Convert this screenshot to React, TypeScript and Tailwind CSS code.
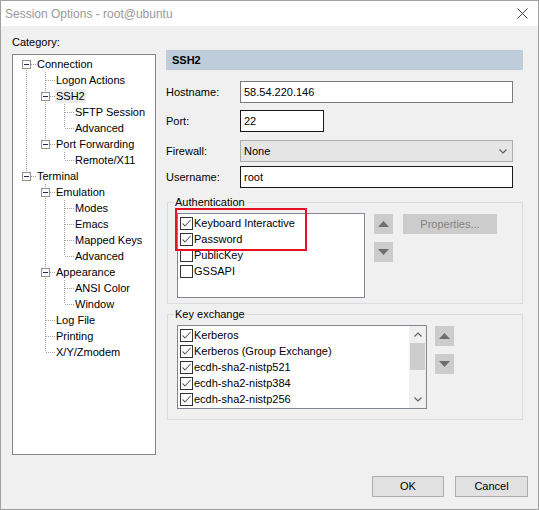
import React from "react";

type TreeNode = { label: string; children?: TreeNode[]; selected?: boolean };

const tree: TreeNode[] = [
  {
    label: "Connection",
    children: [
      { label: "Logon Actions" },
      { label: "SSH2", selected: true, children: [{ label: "SFTP Session" }, { label: "Advanced" }] },
      { label: "Port Forwarding", children: [{ label: "Remote/X11" }] },
    ],
  },
  {
    label: "Terminal",
    children: [
      {
        label: "Emulation",
        children: [{ label: "Modes" }, { label: "Emacs" }, { label: "Mapped Keys" }, { label: "Advanced" }],
      },
      { label: "Appearance", children: [{ label: "ANSI Color" }, { label: "Window" }] },
      { label: "Log File" },
      { label: "Printing" },
      { label: "X/Y/Zmodem" },
    ],
  },
];

type Row = { node: TreeNode; level: number; guides: boolean[]; last: boolean; first: boolean };

function flatten(nodes: TreeNode[], level: number, guides: boolean[], out: Row[]) {
  nodes.forEach((n, i) => {
    const last = i === nodes.length - 1;
    out.push({ node: n, level, guides, last, first: level === 0 && i === 0 });
    if (n.children) flatten(n.children, level + 1, [...guides, !last], out);
  });
  return out;
}

const rows = flatten(tree, 0, [], []);

const DOT = "#a0a0a0";

function GuideCell({ show }: { show: boolean }) {
  return (
    <svg width="19" height="16" className="shrink-0" shapeRendering="crispEdges">
      {show && <line x1="9.5" y1="0" x2="9.5" y2="16" stroke={DOT} strokeDasharray="1 1" />}
    </svg>
  );
}

function OwnCell({ row }: { row: Row }) {
  const hasKids = !!row.node.children;
  return (
    <svg width="19" height="16" className="shrink-0" shapeRendering="crispEdges">
      {!row.first && <line x1="9.5" y1="0" x2="9.5" y2="8" stroke={DOT} strokeDasharray="1 1" />}
      {!row.last && <line x1="9.5" y1="8" x2="9.5" y2="16" stroke={DOT} strokeDasharray="1 1" />}
      <line x1="10" y1="8.5" x2="19" y2="8.5" stroke={DOT} strokeDasharray="1 1" />
      {hasKids && (
        <>
          <rect x="5.5" y="4.5" width="8" height="8" fill="#fff" stroke="#919191" />
          <line x1="7" y1="8.5" x2="12" y2="8.5" stroke="#1f2a5a" />
        </>
      )}
    </svg>
  );
}

function Check({ on }: { on: boolean }) {
  return (
    <div className="w-[13px] h-[13px] shrink-0 border border-[#333] bg-white">
      {on && (
        <svg width="11" height="11" viewBox="0 0 11 11">
          <polyline points="1.5,5.5 4,8 9.5,2" fill="none" stroke="#666" strokeWidth="1.1" />
        </svg>
      )}
    </div>
  );
}

function CheckRow({ label, on }: { label: string; on: boolean }) {
  return (
    <div className="flex items-center h-[16px] pl-[2px]">
      <Check on={on} />
      <span className="ml-[1px] leading-[16px] whitespace-nowrap">{label}</span>
    </div>
  );
}

function Arrow({ up }: { up: boolean }) {
  return (
    <div className="w-[19px] h-[20px] bg-[#cccccc] flex items-center justify-center">
      <svg width="11" height="6" viewBox="0 0 11 6">
        {up ? <polygon points="0,6 11,6 5.5,0" fill="#6e6e6e" /> : <polygon points="0,0 11,0 5.5,6" fill="#6e6e6e" />}
      </svg>
    </div>
  );
}

function Chevron({ up }: { up: boolean }) {
  return (
    <svg width="8" height="5" viewBox="0 0 8 5">
      <polyline points={up ? "0.5,4.5 4,1 7.5,4.5" : "0.5,0.5 4,4 7.5,0.5"} fill="none" stroke="#606060" strokeWidth="1.2" />
    </svg>
  );
}

function Field({ label, children, className }: { label: string; children: React.ReactNode; className: string }) {
  return (
    <div className={"flex items-center " + className}>
      <span className="w-[74px] shrink-0">{label}</span>
      {children}
    </div>
  );
}

export default function App() {
  return (
    <div className="w-[539px] h-[510px] border border-[#a0a0a0] bg-[#f0f0f0] flex flex-col font-['Liberation_Sans',Arial,sans-serif] text-[11px] text-black">
      <div className="h-[25px] shrink-0 bg-white flex items-center justify-between pl-[4px] pr-[10px]">
        <span className="text-[12px] text-[#999999]">Session Options - root@ubuntu</span>
        <svg width="11" height="11" viewBox="0 0 11 11">
          <line x1="0.5" y1="0.5" x2="10.5" y2="10.5" stroke="#444" />
          <line x1="10.5" y1="0.5" x2="0.5" y2="10.5" stroke="#444" />
        </svg>
      </div>

      <div className="flex pl-[11px]">
        {/* category tree */}
        <div className="w-[144px] shrink-0 mt-[8px]">
          <div className="h-[16px] leading-[16px]">Category:</div>
          <div className="mt-[4px] h-[401px] border border-[#828790] bg-white pt-[1px] pl-[4px]">
            {rows.map((r, i) => (
              <div key={i} className="flex items-center h-[16px]">
                {r.guides.map((g, j) => (
                  <GuideCell key={j} show={g} />
                ))}
                <OwnCell row={r} />
                <span
                  className={
                    "ml-[0px] px-[1px] h-[14px] leading-[14px] whitespace-nowrap " +
                    (r.node.selected ? "bg-[#ececec]" : "")
                  }
                >
                  {r.node.label}
                </span>
              </div>
            ))}
          </div>
        </div>

        {/* right panel */}
        <div className="w-[357px] ml-[10px] mt-[24px]">
          <div className="h-[20px] bg-[#bfcddb] pl-[6px] font-bold leading-[20px]">SSH2</div>

          <Field label="Hostname:" className="mt-[11px]">
            <div className="w-[273px] h-[22px] border border-[#7a7a7a] bg-white pl-[3px] leading-[20px]">58.54.220.146</div>
          </Field>
          <Field label="Port:" className="mt-[7px]">
            <div className="w-[84px] h-[22px] border border-[#1a1a1a] bg-white pl-[3px] leading-[20px]">22</div>
          </Field>
          <Field label="Firewall:" className="mt-[8px]">
            <div className="w-[273px] h-[22px] border border-[#adadad] bg-[#e5e5e5] pl-[3px] pr-[5px] flex items-center justify-between">
              <span>None</span>
              <Chevron up={false} />
            </div>
          </Field>
          <Field label="Username:" className="mt-[4px]">
            <div className="w-[273px] h-[22px] border border-[#1a1a1a] bg-white pl-[3px] leading-[20px]">root</div>
          </Field>

          {/* Authentication */}
          <div className="relative mt-[14px] ml-[1px] w-[356px] h-[102px] border border-[#dcdcdc]">
            <span className="absolute left-[6px] top-[-9px] bg-[#f0f0f0] px-[1px] leading-[16px]">Authentication</span>
            <div className="flex items-start pl-[9px] pt-[10px]">
              <div className="w-[188px] h-[85px] border border-[#828790] bg-white pt-[1px]">
                <CheckRow label="Keyboard Interactive" on />
                <CheckRow label="Password" on />
                <CheckRow label="PublicKey" on={false} />
                <CheckRow label="GSSAPI" on={false} />
              </div>
              <div className="ml-[9px] mt-[1px] flex flex-col gap-[8px]">
                <Arrow up />
                <Arrow up={false} />
              </div>
              <div className="ml-[10px] mt-[1px] w-[94px] h-[20px] bg-[#cccccc] text-[#838383] flex items-center justify-center">
                Properties...
              </div>
            </div>
            <div className="absolute left-[7px] top-[5px] w-[132px] h-[43px] border-2 border-[#e81123]" />
          </div>

          {/* Key exchange */}
          <div className="relative mt-[10px] ml-[1px] w-[356px] h-[106px] border border-[#dcdcdc]">
            <span className="absolute left-[6px] top-[-9px] bg-[#f0f0f0] px-[1px] leading-[16px]">Key exchange</span>
            <div className="flex items-start pl-[9px] pt-[10px]">
              <div className="w-[250px] h-[84px] border border-[#828790] bg-white flex">
                <div className="flex-1 pt-[1px] overflow-hidden">
                  <CheckRow label="Kerberos" on />
                  <CheckRow label="Kerberos (Group Exchange)" on />
                  <CheckRow label="ecdh-sha2-nistp521" on />
                  <CheckRow label="ecdh-sha2-nistp384" on />
                  <CheckRow label="ecdh-sha2-nistp256" on />
                </div>
                <div className="w-[17px] flex flex-col bg-[#f0f0f0]">
                  <div className="h-[17px] flex items-center justify-center">
                    <Chevron up />
                  </div>
                  <div className="h-[27px] mx-[1px] bg-[#cdcdcd]" />
                  <div className="flex-1" />
                  <div className="h-[17px] flex items-center justify-center">
                    <Chevron up={false} />
                  </div>
                </div>
              </div>
              <div className="ml-[8px] mt-[1px] flex flex-col gap-[8px]">
                <Arrow up />
                <Arrow up={false} />
              </div>
            </div>
          </div>
        </div>
      </div>

      <div className="mt-[21px] flex justify-end gap-[11px] pr-[10px]">
        <div className="w-[72px] h-[21px] border border-[#adadad] bg-[#e1e1e1] flex items-center justify-center">OK</div>
        <div className="w-[73px] h-[21px] border border-[#adadad] bg-[#e1e1e1] flex items-center justify-center">Cancel</div>
      </div>
    </div>
  );
}
